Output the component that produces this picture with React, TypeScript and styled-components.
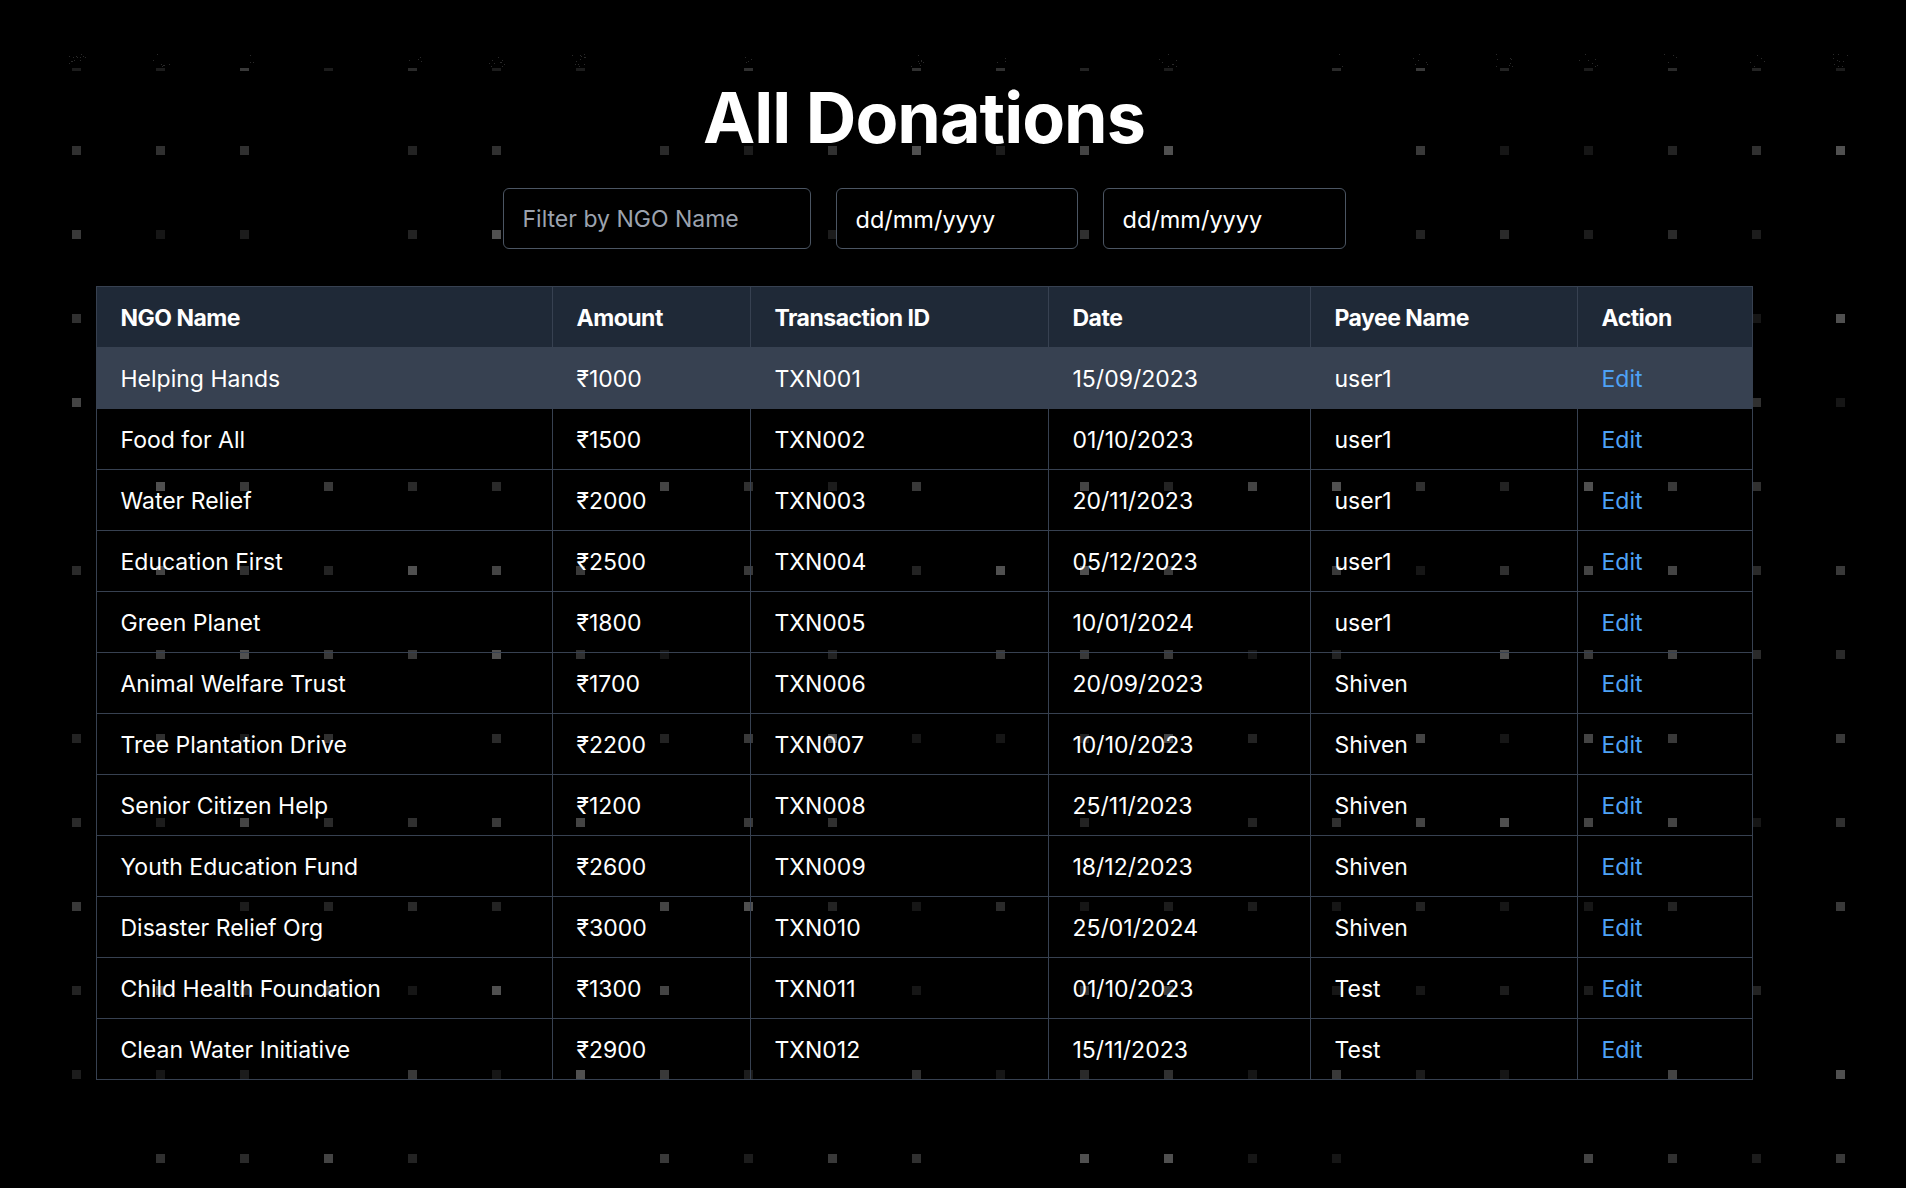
import React from 'react';
import styled, { createGlobalStyle } from 'styled-components';

const GlobalStyle = createGlobalStyle`
  html, body {
    margin: 0;
    padding: 0;
    background: #000;
  }
  body {
    font-family: Inter, "Noto Sans", "Liberation Sans", sans-serif;
    color: #fff;
  }
  * { box-sizing: border-box; }
`;

const Page = styled.div`
  position: relative;
  min-height: 1188px;
  background: #000;
  overflow: hidden;
`;

const Backdrop = styled.svg`
  position: absolute;
  left: 0;
  top: 0;
  z-index: 0;
  pointer-events: none;
`;

const Content = styled.main`
  position: relative;
  z-index: 1;
  width: 1848px;
  padding: 83px 96px 100px;
  display: flex;
  flex-direction: column;
  align-items: center;
`;

const Title = styled.h1`
  margin: 0;
  font-size: 70px;
  line-height: 70px;
  font-weight: 700;
  letter-spacing: -1px;
  color: #fff;
`;

const Filters = styled.div`
  display: flex;
  gap: 25px;
  margin-top: 35px;
`;

const Field = styled.input<{ $w: number; $bright?: boolean }>`
  width: ${(p) => p.$w}px;
  height: 61px;
  padding: 1px 19px 0;
  border: 1px solid #4b5563;
  border-radius: 6px;
  background: #000;
  color: #fff;
  font-family: Inter, "Noto Sans", sans-serif;
  font-size: ${(p) => (p.$bright ? 23.5 : 23)}px;
  outline: none;
  &::placeholder {
    color: ${(p) => (p.$bright ? '#ffffff' : '#9ca3af')};
    opacity: 1;
  }
`;

const Table = styled.table`
  margin-top: 37px;
  width: 1656px;
  border-collapse: collapse;
  table-layout: fixed;
  border: 1px solid #374151;
`;

const HeadRow = styled.tr`
  background: #1f2937;
`;

const Th = styled.th`
  height: 61px;
  padding: 1px 24px 0;
  text-align: left;
  font-size: 23px;
  font-weight: 700;
  letter-spacing: -0.5px;
  color: #fff;
  border: 1px solid #374151;
`;

const Row = styled.tr<{ $active?: boolean }>`
  background: ${(p) => (p.$active ? '#374151' : 'transparent')};
`;

const Td = styled.td`
  height: 61px;
  padding: 2px 24px 0;
  font-size: 23px;
  font-weight: 400;
  color: #fff;
  border: 1px solid #374151;
  white-space: nowrap;
`;

const EditLink = styled.a`
  color: #4ea2f6;
  text-decoration: none;
  cursor: pointer;
`;

const cols = [456, 198, 298, 262, 267, 175];

const rows: [string, string, string, string, string][] = [
  ['Helping Hands', '₹1000', 'TXN001', '15/09/2023', 'user1'],
  ['Food for All', '₹1500', 'TXN002', '01/10/2023', 'user1'],
  ['Water Relief', '₹2000', 'TXN003', '20/11/2023', 'user1'],
  ['Education First', '₹2500', 'TXN004', '05/12/2023', 'user1'],
  ['Green Planet', '₹1800', 'TXN005', '10/01/2024', 'user1'],
  ['Animal Welfare Trust', '₹1700', 'TXN006', '20/09/2023', 'Shiven'],
  ['Tree Plantation Drive', '₹2200', 'TXN007', '10/10/2023', 'Shiven'],
  ['Senior Citizen Help', '₹1200', 'TXN008', '25/11/2023', 'Shiven'],
  ['Youth Education Fund', '₹2600', 'TXN009', '18/12/2023', 'Shiven'],
  ['Disaster Relief Org', '₹3000', 'TXN010', '25/01/2024', 'Shiven'],
  ['Child Health Foundation', '₹1300', 'TXN011', '01/10/2023', 'Test'],
  ['Clean Water Initiative', '₹2900', 'TXN012', '15/11/2023', 'Test'],
];

function mulberry32(a: number) {
  return function () {
    a |= 0;
    a = (a + 0x6d2b79f5) | 0;
    let t = Math.imul(a ^ (a >>> 15), 1 | a);
    t = (t + Math.imul(t ^ (t >>> 7), 61 | t)) ^ t;
    return ((t ^ (t >>> 14)) >>> 0) / 4294967296;
  };
}

const shades = ['#161616', '#1c1c1c', '#232323', '#2a2a2a', '#303030', '#393939', '#444444', '#505050'];

function SquareGrid() {
  const rand = mulberry32(7);
  const items: React.ReactNode[] = [];
  for (let c = 0; c < 22; c++) {
    const x = 72 + 84 * c;
    // faded top row
    if (rand() < 0.85) {
      const shade = shades[Math.floor(rand() * 5) + 1];
      items.push(<rect key={`t${c}`} x={x} y={68} width={9} height={3} fill={shade} />);
      const n = Math.floor(rand() * 14);
      for (let d = 0; d < n; d++) {
        const dx = x - 5 + Math.floor(rand() * 19);
        const dy = 54 + Math.floor(rand() * 13);
        items.push(<rect key={`d${c}-${d}`} x={dx} y={dy} width={1} height={1} fill="#2a2a2a" />);
      }
    }
    for (let r = 0; r < 13; r++) {
      const y = 146 + 84 * r;
      const v = rand();
      const s = rand();
      if (v < 0.2) continue;
      items.push(
        <rect key={`${c}-${r}`} x={x} y={y} width={9} height={9} fill={shades[Math.floor(s * shades.length)]} />
      );
    }
  }
  return (
    <Backdrop width={1906} height={1188} viewBox="0 0 1906 1188">
      {items}
    </Backdrop>
  );
}

export default function App() {
  return (
    <>
      <GlobalStyle />
      <Page>
        <SquareGrid />
        <Content>
          <Title>All Donations</Title>
          <Filters>
            <Field $w={308} type="text" placeholder="Filter by NGO Name" />
            <Field $w={242} $bright type="text" placeholder="dd/mm/yyyy" />
            <Field $w={243} $bright type="text" placeholder="dd/mm/yyyy" />
          </Filters>
          <Table>
            <colgroup>
              {cols.map((w, i) => (
                <col key={i} style={{ width: w }} />
              ))}
            </colgroup>
            <thead>
              <HeadRow>
                <Th>NGO Name</Th>
                <Th>Amount</Th>
                <Th>Transaction ID</Th>
                <Th>Date</Th>
                <Th>Payee Name</Th>
                <Th>Action</Th>
              </HeadRow>
            </thead>
            <tbody>
              {rows.map((r, i) => (
                <Row key={r[2]} $active={i === 0}>
                  {r.map((cell, j) => (
                    <Td key={j}>{cell}</Td>
                  ))}
                  <Td>
                    <EditLink>Edit</EditLink>
                  </Td>
                </Row>
              ))}
            </tbody>
          </Table>
        </Content>
      </Page>
    </>
  );
}
